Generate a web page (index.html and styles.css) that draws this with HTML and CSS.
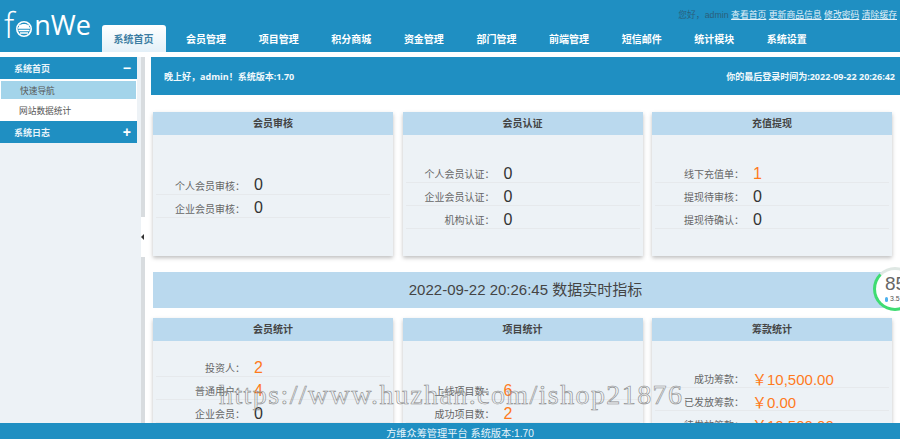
FILE: index.html
```html
<!DOCTYPE html>
<html lang="en">
  <head>
    <meta charset="UTF-8" />
    <title>方维众筹管理平台</title>
    <link rel="stylesheet" href="styles.css">
  </head>
  <body>
    <div class="header">
      <div class="logo">
        <span class="logo-f">f</span>
        <svg class="logo-a" width="16" height="18" viewBox="0 0 16 18">
          <circle cx="8" cy="9" r="7.2" fill="none" stroke="#fff" stroke-width="1.6" />
          <path d="M2 8h12M2.500 10.500h11M4 13h8" stroke="#fff" stroke-width="1.500" />
          <path d="M3 5.500C5 3.500 11 3.500 13 5.500V8H3z" fill="#fff" />
        </svg>
        <span>nWe</span>
      </div>
      <div class="top-links">
        <span class="hello">您好，admin</span>
        <a>查看首页</a>
        <a>更新商品信息</a>
        <a>修改密码</a>
        <a>清除缓存</a>
      </div>
      <div class="nav">
        <a class="active">系统首页</a>
        <a>会员管理</a>
        <a>项目管理</a>
        <a>积分商城</a>
        <a>资金管理</a>
        <a>部门管理</a>
        <a>前端管理</a>
        <a>短信邮件</a>
        <a>统计模块</a>
        <a>系统设置</a>
      </div>
    </div>

    <div class="page">
      <div class="sidebar">
        <div class="side-title"><span>系统首页</span><b>−</b></div>
        <div class="side-item current">快速导航</div>
        <div class="side-item">网站数据统计</div>
        <div class="side-title"><span>系统日志</span><b>+</b></div>
      </div>

      <div class="splitter">
        <div class="toggle"><i></i></div>
      </div>

      <div class="main">
        <div class="welcome">
          <span>晚上好，admin！系统版本:1.70</span>
          <span>你的最后登录时间为:2022-09-22 20:26:42</span>
        </div>

        <div class="cards">
          <div class="card">
            <h4>会员审核</h4>
            <div class="card-body">
              <div class="row"><label>个人会员审核：</label><em>0</em></div>
              <div class="row"><label>企业会员审核：</label><em>0</em></div>
            </div>
          </div>
          <div class="card">
            <h4>会员认证</h4>
            <div class="card-body">
              <div class="row"><label>个人会员认证：</label><em>0</em></div>
              <div class="row"><label>企业会员认证：</label><em>0</em></div>
              <div class="row"><label>机构认证：</label><em>0</em></div>
            </div>
          </div>
          <div class="card">
            <h4>充值提现</h4>
            <div class="card-body">
              <div class="row"><label>线下充值单：</label><em class="hot">1</em></div>
              <div class="row"><label>提现待审核：</label><em>0</em></div>
              <div class="row"><label>提现待确认：</label><em>0</em></div>
            </div>
          </div>
        </div>

        <div class="realtime">2022-09-22 20:26:45 数据实时指标</div>

        <div class="cards">
          <div class="card">
            <h4>会员统计</h4>
            <div class="card-body from-top first">
              <div class="row"><label>投资人：</label><em class="hot">2</em></div>
              <div class="row"><label>普通用户：</label><em class="hot">4</em></div>
              <div class="row"><label>企业会员：</label><em>0</em></div>
            </div>
          </div>
          <div class="card">
            <h4>项目统计</h4>
            <div class="card-body from-top second">
              <div class="row"><label>上线项目数：</label><em class="hot">6</em></div>
              <div class="row"><label>成功项目数：</label><em class="hot">2</em></div>
            </div>
          </div>
          <div class="card">
            <h4>筹款统计</h4>
            <div class="card-body from-top third">
              <div class="row"><label>成功筹款：</label><em class="hot money">￥10,500.00</em></div>
              <div class="row"><label>已发放筹款：</label><em class="hot money">￥0.00</em></div>
              <div class="row"><label>待发放筹款：</label><em class="hot money">￥10,500.00</em></div>
            </div>
          </div>
        </div>
      </div>
    </div>

    <div class="gauge">
      <strong>85</strong>
      <small><i></i>3.5</small>
    </div>

    <div class="watermark">https://www.huzhan.com/ishop21876</div>

    <div class="footer">方维众筹管理平台 系统版本:1.70</div>
  </body>
</html>
```

FILE: styles.css
```css
* {
  box-sizing: border-box;
}
html,
body {
  height: 100%;
}
body {
  margin: 0;
  overflow: hidden;
  background: #fff;
  color: #444;
  font-family: "Liberation Sans", "Noto Sans CJK SC", sans-serif;
  font-size: 10px;
}

/* header */
.header {
  position: relative;
  height: 52px;
  background: #1f8fc2;
}
.logo {
  display: flex;
  align-items: flex-end;
  height: 52px;
  padding: 0 0 12px 4px;
  color: #fff;
  font-family: "Open Sans", sans-serif;
  font-size: 27px;
  line-height: 30px;
}
.logo-f {
  font-size: 34px;
  font-weight: 300;
  margin-right: 2px;
}
.logo-a {
  margin: 0 2px 2px 0;
}
.top-links {
  position: absolute;
  top: 9px;
  right: 3px;
  display: flex;
  gap: 2.500px;
  font-size: 8.800px;
  line-height: 12px;
}
.top-links a {
  color: #e4f2f9;
  text-decoration: underline;
}
.hello {
  color: #2a5f7c;
}
.nav {
  position: absolute;
  left: 102px;
  bottom: 0;
  display: flex;
  gap: 8.600px;
}
.nav a {
  width: 64px;
  height: 27px;
  padding: 1px 1px 0 0;
  color: #fff;
  font-size: 10px;
  font-weight: bold;
  line-height: 28px;
  text-align: center;
}
.nav a.active {
  color: #3d7ea3;
  background: linear-gradient(#fff, #e3f0f8);
  border-radius: 3px 3px 0 0;
}

/* page */
.page {
  display: flex;
  height: 371px;
  margin-top: 5px;
  overflow: hidden;
}
.sidebar {
  flex: none;
  width: 141px;
  padding-right: 4px;
  background: #edf2f6;
}
.side-title {
  display: flex;
  justify-content: space-between;
  align-items: center;
  height: 22px;
  padding: 0 6px 0 14px;
  background: #1f8fc2;
  color: #e8f4fa;
  font-size: 9px;
  font-weight: bold;
}
.side-title b {
  color: #fff;
  font-size: 14px;
}
.side-item {
  height: 20px;
  padding-left: 19px;
  background: #fff;
  color: #555;
  font-size: 8.700px;
  line-height: 20px;
}
.side-item.current {
  height: 22px;
  border: 1px solid #fff;
  border-width: 2px 1px;
  background: #a3d4ea;
}
.splitter {
  position: relative;
  flex: none;
  width: 10px;
  border-left: 4px solid #d8dcdf;
}
.toggle {
  position: absolute;
  top: 160px;
  left: -4px;
  display: flex;
  align-items: center;
  width: 5px;
  height: 40px;
  background: #fff;
}
.toggle i {
  width: 0;
  height: 0;
  border: 3px solid transparent;
  border-right-color: #333;
  border-left-width: 0;
}

/* main column */
.main {
  flex: none;
  width: 749px;
}
.welcome {
  display: flex;
  justify-content: space-between;
  align-items: center;
  height: 38px;
  padding: 0 5px 0 13px;
  background: #1f8fc2;
  color: #f2f9fc;
  font-family: "Open Sans", "Noto Sans CJK SC", sans-serif;
  font-size: 9px;
  font-weight: bold;
}
.cards {
  display: grid;
  grid-template-columns: repeat(3, 240px);
  gap: 9.500px;
  margin: 17px 0 0 2px;
}
.card {
  height: 144px;
  background: #edf2f6;
  box-shadow: 0 2px 4px rgba(0, 0, 0, 0.25);
}
.card h4 {
  height: 23px;
  margin: 0;
  background: #bad9ee;
  color: #444;
  font-size: 10px;
  line-height: 23px;
  text-align: center;
}
.card-body {
  display: flex;
  flex-direction: column;
  justify-content: center;
  height: 118px;
  padding: 1px 3px 0;
}
.card-body.from-top {
  justify-content: flex-start;
}
.card-body.first {
  padding-top: 13px;
}
.card-body.second {
  padding-top: 36px;
}
.card-body.third {
  padding-top: 24px;
}
.row {
  display: flex;
  align-items: center;
  flex: none;
  height: 23px;
  padding-top: 5px;
  border-bottom: 1px solid #e6e9ec;
}
.row label {
  width: 89px;
  color: #666;
  font-size: 10px;
  text-align: right;
}
.row em {
  margin-left: 9px;
  color: #333;
  font-size: 16px;
  font-style: normal;
}
.row em.hot {
  color: #ff7a1c;
}
.row em.money {
  margin-left: 8px;
  font-size: 15px;
}
.realtime {
  height: 36px;
  margin: 16px 9px 10px 2px;
  padding-left: 7px;
  background: #bad9ee;
  color: #444;
  font-size: 15px;
  line-height: 36px;
  text-align: center;
}
.realtime + .cards {
  margin-top: 0;
}

/* overlays */
.gauge {
  position: absolute;
  left: 873px;
  top: 267px;
  width: 44px;
  height: 44px;
  padding-left: 9px;
  border: 3px solid #3fdc72;
  border-top-color: #dfe8e4;
  border-radius: 50%;
  background: #fff;
  color: #666;
}
.gauge strong {
  display: block;
  font-size: 19px;
  font-weight: normal;
  line-height: 22px;
  margin-top: 3px;
}
.gauge small {
  display: flex;
  align-items: center;
  gap: 2px;
  color: #555;
  font-size: 7px;
  line-height: 8px;
}
.gauge i {
  width: 3px;
  height: 5px;
  border-radius: 2px;
  background: #4eb1ee;
}
.watermark {
  position: absolute;
  left: 219px;
  top: 379px;
  color: transparent;
  font-family: "Liberation Serif", serif;
  font-size: 28px;
  letter-spacing: 1.400px;
  line-height: 32px;
  white-space: nowrap;
  -webkit-text-stroke: 0.6px #8a8a8a;
}
.footer {
  position: absolute;
  left: 0;
  right: 0;
  bottom: 0;
  height: 16px;
  padding-left: 20px;
  background: #1f8fc2;
  color: #e8f4fa;
  font-size: 10.200px;
  line-height: 21px;
  text-align: center;
}
```
